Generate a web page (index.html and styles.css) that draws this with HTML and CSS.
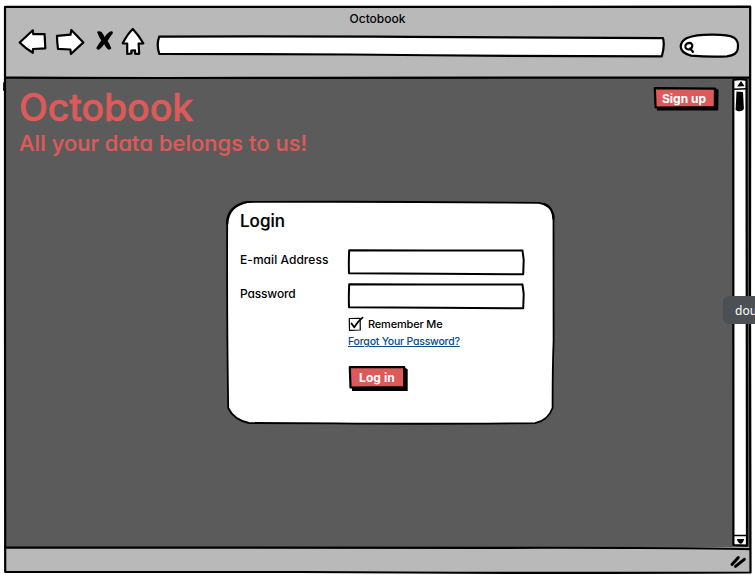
FILE: index.html
```html
<!DOCTYPE html>
<html lang="en">
<head>
<meta charset="utf-8">
<title>Octobook</title>
<link rel="stylesheet" href="styles.css">
</head>
<body>
<div class="window">
  <header class="chrome">
    <div class="window-title"><span>Octobook</span></div>
    <nav class="toolbar">
      <svg class="nav-icons" width="134" height="36" viewBox="14 24 134 36">
        <g class="ink icon">
          <path d="M19.7 42.5 L32.8 30.3 L33.2 34.2 L44.6 34 L45.3 48.3 L33 49 L32.8 52.8 Q25 48 19.7 42.5 Z"/>
          <path d="M57 35.8 L70.5 34.7 L71.3 30 L83.4 42.4 L70.9 54 L70.4 49.5 L58 48.8 Q57 42 57 35.8 Z"/>
          <path d="M132.8 29 Q127.5 34 122.7 43.3 L127.2 43.5 L127.2 54 L131.4 53.5 L131.4 50.5 L135 50.3 L135.2 53.8 L139.2 53.8 L138.6 43.7 L143.3 43.3 Q138.5 35 132.8 29 Z"/>
        </g>
        <path d="M97 31.8 Q99.5 30.5 101.5 32 Q103.4 34 104.6 37 Q107.5 33 110.5 31.3 Q113.5 31 112.7 33.6 Q109.5 37.5 107.6 41 Q109.7 44 111.4 48.6 Q109.5 50.5 107.8 49.3 Q105.5 47 104.2 44.3 Q102 47.5 99.3 49.6 Q97 50.4 96.3 48 Q98.5 44 101.3 40.5 Q98.8 37 97 31.8 Z"/>
      </svg>
      <svg class="address" width="510" height="26" viewBox="156 34 510 26">
        <path class="ink" d="M159.2 36.6 Q300 36.2 410 36.9 Q540 37 663 38.1 Q665 46 661.8 56.4 Q500 56.2 350 54.5 Q240 53.8 159.3 53.8 Q156.2 45 159.2 36.6 Z"/>
      </svg>
      <svg class="search" width="64" height="28" viewBox="678 32 64 28">
        <path class="ink" d="M687 38 Q696 34.5 713 34.7 Q729 34.7 734 37.7 Q739 41 737.8 49 Q737 55 727 56.4 Q709 57.3 691 55.6 Q681 53 680.7 46.6 Q681 41 687 38 Z"/>
        <path class="ink lens" d="M691 43 Q687 42.3 685.4 45.6 Q685 49.2 688.6 49.5 Q692.5 49 692.3 45 Q691.8 43 688 43 M690.3 48.4 L693 52"/>
      </svg>
    </nav>
  </header>

  <main class="viewport">
    <section class="page">
      <div class="masthead">
        <div>
          <h1><span>Octobook</span></h1>
          <p class="tagline"><span>All your data belongs to us!</span></p>
        </div>
        <button class="button signup" type="button">
          <svg class="sketch" viewBox="0 0 66 26">
            <path d="M3 3.5 L63.5 2.5 L65.5 4 L65.2 24.5 L4 24.5 Z"/>
            <path class="red" d="M1.8 2.1 L62 2.7 L61.8 21.2 L2.6 21.5 Z"/>
          </svg>
          <span>Sign up</span>
        </button>
      </div>

      <form class="login">
        <svg class="sketch" viewBox="0 0 330 224">
          <path class="ink card-line" d="M21 1 Q110 0.5 190 1 L313 1.9 Q325 4 327.5 14 L327.6 140 Q326.5 170 326.6 207 Q322 219.5 309 222.2 Q200 223.2 110 222.4 L23 222 Q8 219 2.2 207 Q0.8 120 1.2 19 Q3 5 21 1 Z"/>
          <path class="ink corner" d="M1.2 23 Q2 5 21 1 M318 2.9 Q327 6 327.5 18"/>
        </svg>
        <h2><span>Login</span></h2>
        <div class="row">
          <label class="field-label"><span>E-mail Address</span></label>
          <svg class="field" width="178" height="28" viewBox="0 0 178 28"><path class="ink" d="M2.2 2.3 L80 2.6 L175.5 2.6 L176.7 12 L176.2 26.2 L90 25.8 L2 25.3 Q1.6 14 2.2 2.3 Z"/></svg>
        </div>
        <div class="row">
          <label class="field-label password"><span>Password</span></label>
          <svg class="field" width="178" height="28" viewBox="0 0 178 28"><path class="ink" d="M2.2 2.3 L80 2.6 L175.5 2.6 L176.7 12 L176.2 26.2 L90 25.8 L2 25.3 Q1.6 14 2.2 2.3 Z"/></svg>
        </div>
        <div class="options">
          <label class="remember">
            <svg width="16" height="16" viewBox="0 0 16 16"><path class="ink box" d="M1.3 2.5 L12.1 2.4 L12.3 14 L1.5 14.3 Z"/><path class="ink tick" d="M3.5 7.5 L6.2 11.2 Q9.5 5.5 14.5 1.6"/></svg>
            <span>Remember Me</span>
          </label>
          <a class="forgot"><span>Forgot Your Password?</span></a>
          <button class="button submit" type="button">
            <svg class="sketch" viewBox="0 0 60 26">
              <path d="M3 3.5 L57 2.8 L59.7 4.3 L59.7 26 L4 26 Z"/>
              <path class="red" d="M1.8 2 L56.2 2.2 L56.2 22 L2.5 22.5 Z"/>
            </svg>
            <span>Log in</span>
          </button>
        </div>
      </form>
    </section>
    <svg class="scrollbar" width="18" height="470" viewBox="732 78 18 470">
      <path class="ink" d="M733.3 81 Q740 79.5 746.5 81 L747 546.6 L733.4 546 Z"/>
      <path class="ink slim" d="M734 90.3 L747 89.8 M734 536.5 L747 536.5"/>
      <path d="M737.2 87.5 L741 82 L744.6 87.3 Z M736.8 540 L744.2 540 Q743 544.7 740.5 544.7 Q738 544 736.8 540 Z"/>
      <path d="M736.5 92.5 L743 93 L743.9 110 Q742 113 738 112.2 L735.6 111 Z"/>
    </svg>
  </main>

  <footer class="status">
    <svg width="20" height="16" viewBox="729 555 20 16"><path class="ink grip" d="M732 565.5 L738.3 558.5 M735.5 567.3 L744.3 560.3"/></svg>
  </footer>

  <svg class="frame" width="755" height="577" viewBox="0 0 755 577">
    <path class="ink" d="M5 6.9 L300 6.9 L750.2 6.7 L750 300 L750.5 572.5 Q500 573.5 300 572 L5.2 572 L5 300 Z M5 77.4 Q80 78.3 300 77.8 L750 77.6 M5 547.6 L500 547.8 Q660 547.5 750 549.2"/>
    <path class="ink" d="M4.3 83 L4.2 90"/>
  </svg>
  <div class="tooltip">dou</div>
</div>
</body>
</html>
```

FILE: styles.css
```css
* { box-sizing: border-box; }

body {
  margin: 0;
  background: #fff;
  color: #000;
  font-family: Inter, "Liberation Sans", sans-serif;
  font-feature-settings: "cv11" 1;
  font-weight: 500;
}

h1, h2, p { margin: 0; font-weight: 500; }

svg { display: block; flex: none; }

.window {
  position: relative;
  width: 755px;
  height: 577px;
  padding: 7px 5px 5px;
  display: flex;
  flex-direction: column;
  overflow: hidden;
}

.ink {
  fill: none;
  stroke: #000;
  stroke-width: 2.2;
  stroke-linecap: round;
  stroke-linejoin: round;
}

.chrome { height: 71px; background: #b9b9b9; }

.window-title {
  height: 22px;
  text-align: center;
  font-size: 12px;
  line-height: 23px;
}

.toolbar { display: flex; padding-left: 9px; }
.nav-icons { margin-top: -5px; }
.icon, .address .ink, .search .ink { fill: #fff; }
.address { margin: 5px 0 0 8px; }
.search { margin: 3px 0 0 12px; }
.search .lens { fill: none; stroke-width: 2.1; }

.viewport { display: flex; height: 470px; background: #5b5b5b; }
.page { width: 727px; padding: 9px 13px 0 14px; }
.scrollbar .ink { fill: #fff; }
.scrollbar .slim { stroke-width: 1.5; }

.masthead {
  display: flex;
  justify-content: space-between;
  height: 115px;
  color: #dd5a5a;
}

h1 {
  font-size: 37.5px;
  line-height: 44px;
  letter-spacing: -0.1px;
  -webkit-text-stroke: 0.6px #dd5a5a;
}
.tagline {
  font-size: 22px;
  line-height: 26px;
  letter-spacing: 0.02px;
  -webkit-text-stroke: 0.2px #dd5a5a;
}

.button {
  position: relative;
  display: block;
  padding: 0;
  border: 0;
  background: none;
  color: #fff;
  font: 700 12px/24px Inter, "Liberation Sans", sans-serif;
  text-align: left;
}
.button span { position: relative; }
.button .red { fill: #dd5a5a; stroke: #000; stroke-width: 2.2; stroke-linejoin: round; }

.signup { width: 66px; height: 26px; padding-left: 9px; }
.submit { width: 60px; height: 26px; padding-left: 11px; margin-top: 15px; letter-spacing: 0.1px; }

.sketch { position: absolute; inset: 0; width: 100%; height: 100%; overflow: visible; }

.login {
  position: relative;
  width: 330px;
  height: 224px;
  margin-left: 207px;
  padding: 8px 0 0 14px;
}
.login > :not(.sketch) { position: relative; }
.card-line { fill: #fff; stroke-width: 1.8; }
.corner { stroke-width: 2.2; }

h2 { height: 39px; font-size: 17px; line-height: 24px; -webkit-text-stroke: 0.2px #000; }

.row { display: flex; height: 34px; }
.field-label { width: 107px; font-size: 12px; line-height: 23px; letter-spacing: 0.05px; }
.password { letter-spacing: -0.15px; }
.field .ink { stroke-width: 2; }

.options { padding-left: 108px; }
.remember { display: flex; gap: 4px; font-size: 11px; line-height: 17px; height: 17px; letter-spacing: -0.18px; }
.remember .box { stroke-width: 1.2; }
.remember .tick { stroke-width: 1.8; }
.forgot {
  display: block;
  height: 17px;
  color: #0a4a8f;
  font-size: 10.5px;
  line-height: 18px;
  letter-spacing: -0.22px;
  text-decoration: underline;
  text-decoration-thickness: 1px;
  text-underline-offset: 1px;
}

.status {
  display: flex;
  justify-content: flex-end;
  height: 25px;
  padding: 7px 1px 0 0;
  background: #b9b9b9;
}
.grip { stroke-width: 3; }

.frame { position: absolute; inset: 0; pointer-events: none; }

.tooltip {
  position: absolute;
  left: 723px;
  top: 296px;
  width: 60px;
  height: 28px;
  padding-left: 12px;
  border-radius: 6px;
  background: #4c4f54;
  color: #fff;
  font: 400 12px/29px "Noto Sans", sans-serif;
}
```
